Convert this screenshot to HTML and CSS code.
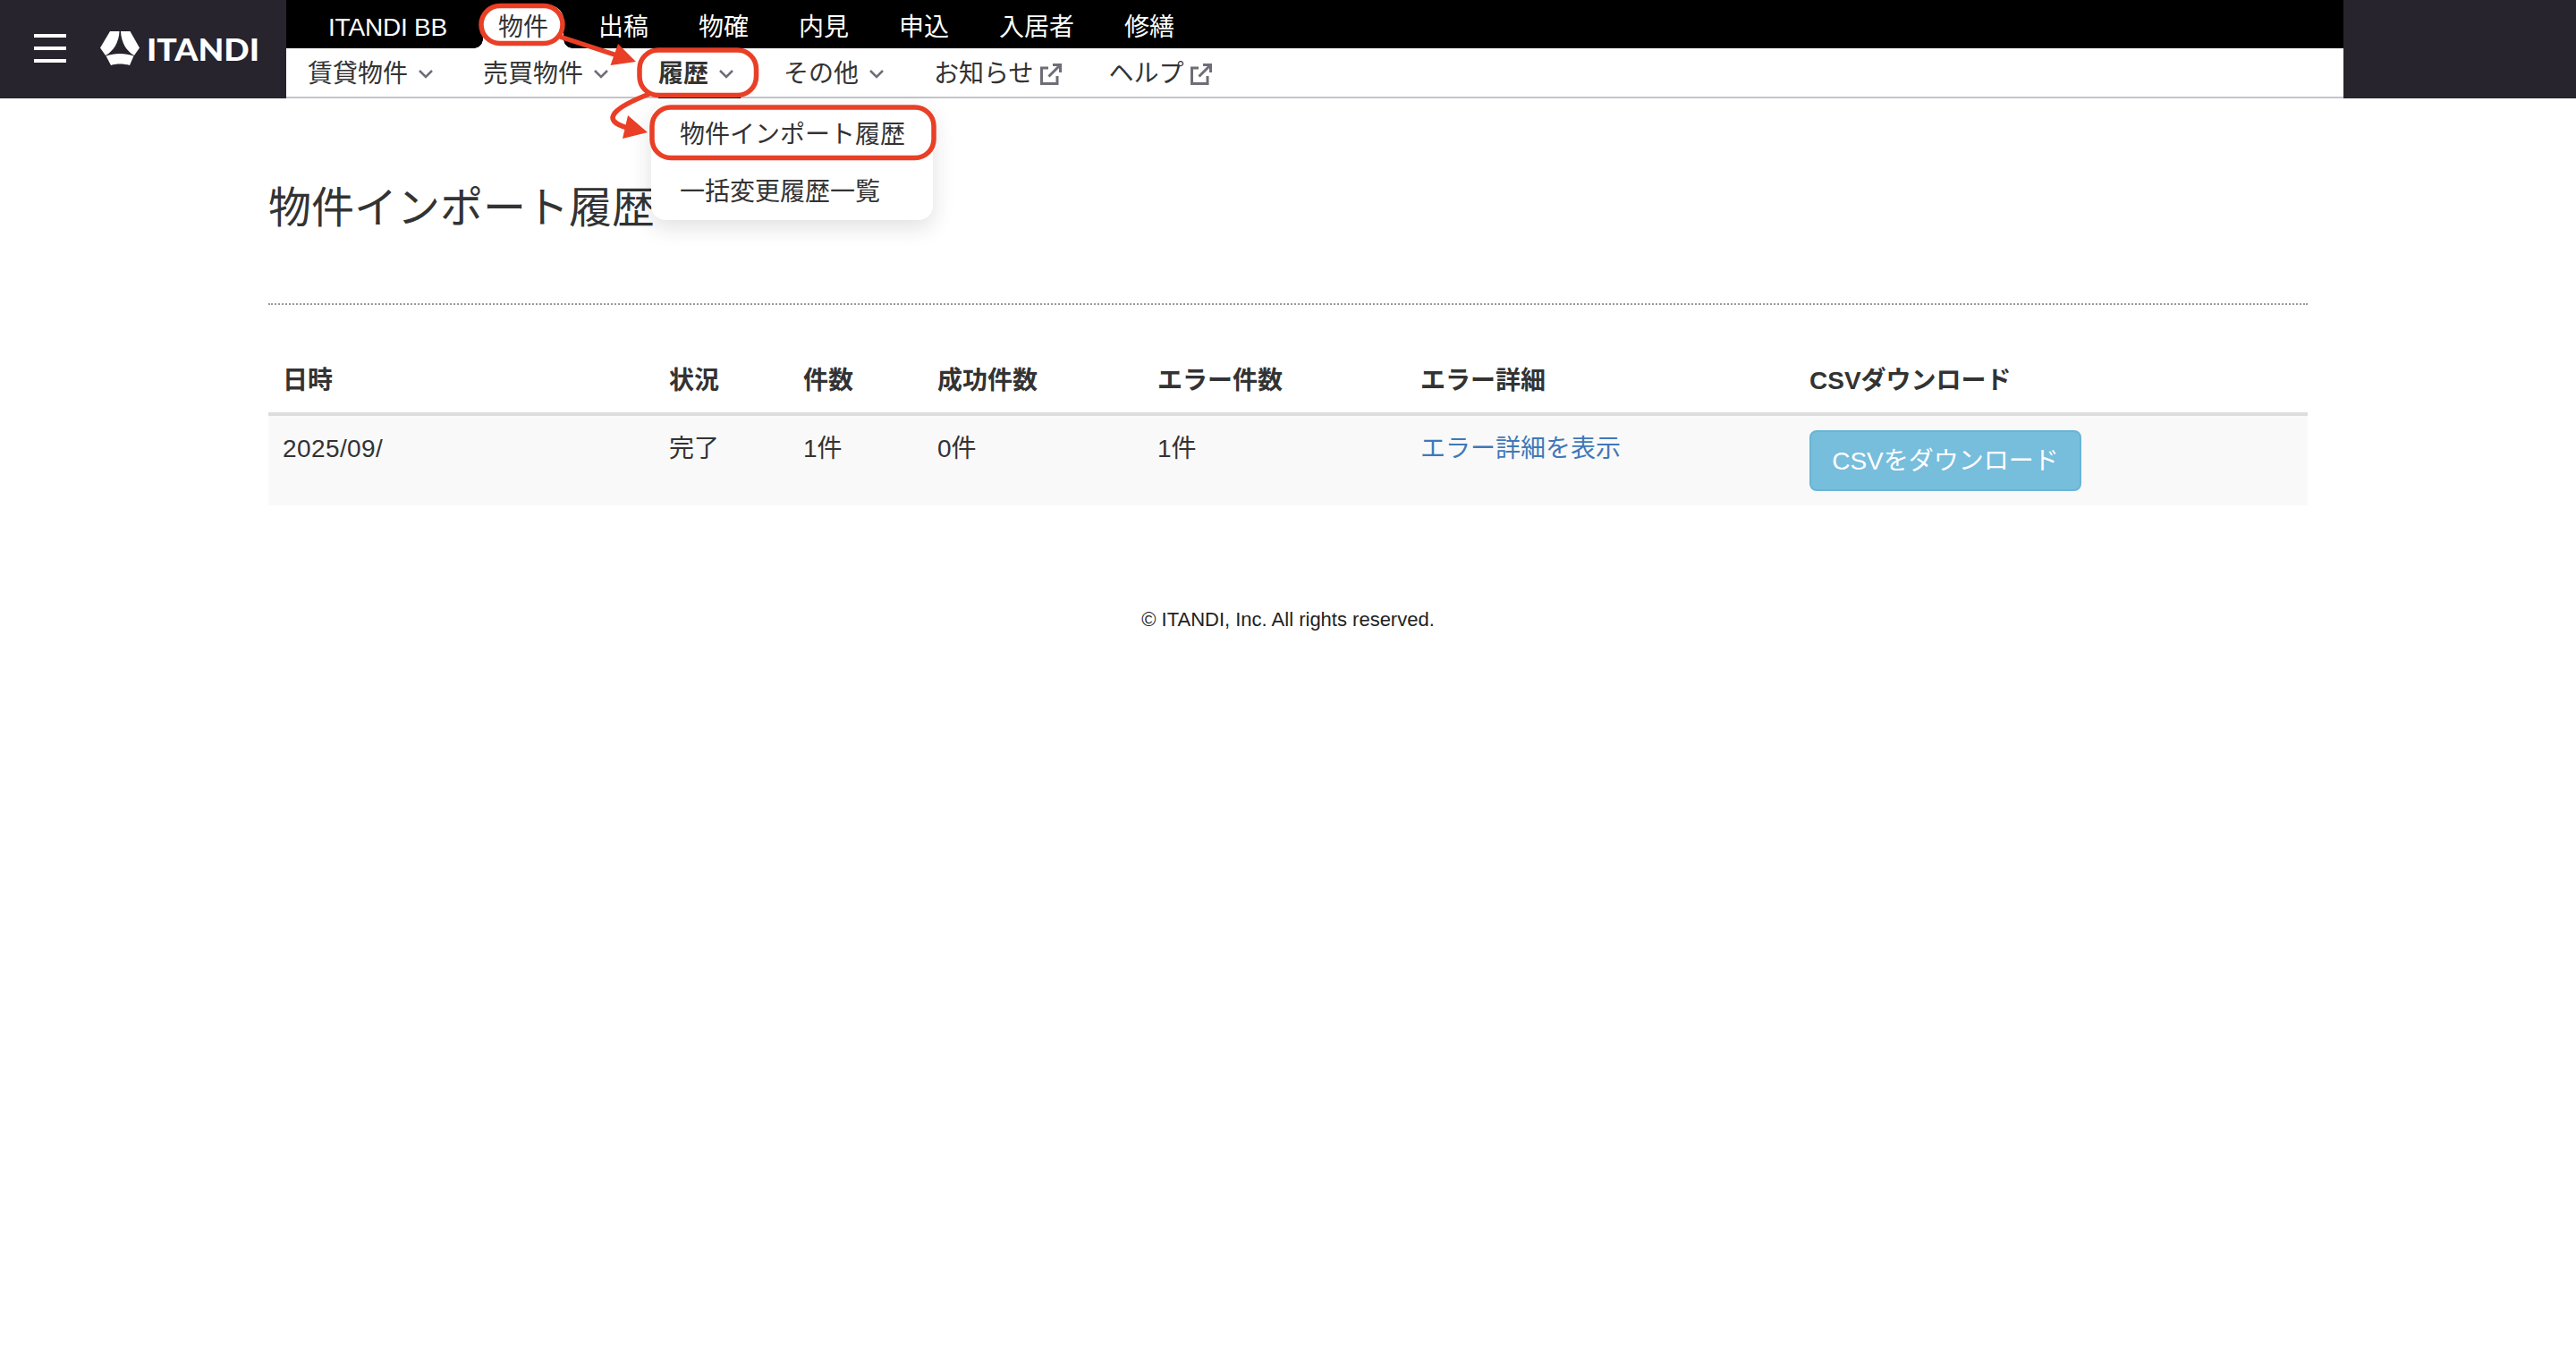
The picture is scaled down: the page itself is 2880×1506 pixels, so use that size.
FILE: index.html
```html
<!DOCTYPE html>
<html lang="ja">
<head>
    <meta charset="UTF-8">
    <meta name="viewport" content="width=device-width, initial-scale=1.0">
    <title>物件インポート履歴</title>
    <link rel="stylesheet" href="styles.css">
</head>
<body>
    <header class="header">
        <div class="brand">
            <div class="hamburger"><span></span><span></span><span></span></div>
            <svg class="logo-mark" width="44" height="38" viewBox="0 0 44 38" fill="#fff">
                <path d="M11 0H21.500C21 12 15 22 6 27L0 18.500Z"/>
                <path d="M23 0H33.500L44 18.500L38 27C29 22 23.500 12 23 0Z"/>
                <path d="M6.500 27.500C16 24 28 24 37.500 27.500L33 38C26 36 18 36 12 38Z"/>
            </svg>
            <svg class="logo-text" width="128" height="44" viewBox="0 0 128 44">
                <text x="-1" y="35" textLength="126" lengthAdjust="spacingAndGlyphs">ITANDI</text>
            </svg>
        </div>

        <div class="menus">
            <nav class="main-nav">
                <a class="home">ITANDI BB</a>
                <a class="current">物件</a>
                <a>出稿</a>
                <a>物確</a>
                <a>内見</a>
                <a>申込</a>
                <a>入居者</a>
                <a>修繕</a>
            </nav>
            <nav class="sub-nav">
                <a>賃貸物件<svg class="chevron" viewBox="0 0 16 10"><path d="M1 1L8 8L15 1"/></svg></a>
                <a>売買物件<svg class="chevron" viewBox="0 0 16 10"><path d="M1 1L8 8L15 1"/></svg></a>
                <div class="has-menu">
                    <a class="active">履歴<svg class="chevron" viewBox="0 0 16 10"><path d="M1 1L8 8L15 1"/></svg></a>
                    <div class="dropdown">
                        <a>物件インポート履歴</a>
                        <a>一括変更履歴一覧</a>
                    </div>
                </div>
                <a>その他<svg class="chevron" viewBox="0 0 16 10"><path d="M1 1L8 8L15 1"/></svg></a>
                <a>お知らせ<svg class="external" viewBox="0 0 24 24"><path d="M9 5H1.500V22.500H19V14M14 1.500H22.500V10M22 2L9.500 14.500"/></svg></a>
                <a>ヘルプ<svg class="external" viewBox="0 0 24 24"><path d="M9 5H1.500V22.500H19V14M14 1.500H22.500V10M22 2L9.500 14.500"/></svg></a>
            </nav>
        </div>
    </header>

    <main class="container">
        <h1>物件インポート履歴</h1>
        <table class="history">
            <colgroup>
                <col class="col-date"><col class="col-status"><col class="col-count"><col class="col-success">
                <col class="col-error"><col class="col-detail"><col class="col-csv">
            </colgroup>
            <thead>
                <tr>
                    <th>日時</th>
                    <th>状況</th>
                    <th>件数</th>
                    <th>成功件数</th>
                    <th>エラー件数</th>
                    <th>エラー詳細</th>
                    <th>CSVダウンロード</th>
                </tr>
            </thead>
            <tbody>
                <tr>
                    <td class="date">2025/09/</td>
                    <td>完了</td>
                    <td>1件</td>
                    <td>0件</td>
                    <td>1件</td>
                    <td><a class="link">エラー詳細を表示</a></td>
                    <td class="csv"><a class="btn">CSVをダウンロード</a></td>
                </tr>
            </tbody>
        </table>
    </main>

    <footer class="footer">© ITANDI, Inc. All rights reserved.</footer>

    <!-- 操作手順の赤枠と矢印 -->
    <svg class="guide" width="1100" height="260" viewBox="0 0 1100 260">
        <rect x="538" y="6.500" width="91" height="42" rx="21"/>
        <rect x="715" y="56" width="130.500" height="50.500" rx="21"/>
        <rect x="729" y="120" width="315" height="56.500" rx="21"/>
        <path d="M626 41L690 62"/>
        <path d="M726 105C690 119 668 134 702 143"/>
        <path class="head" d="M711 69L691 49L682.500 73Z"/>
        <path class="head" d="M724 148L702 129L696 155Z"/>
    </svg>
</body>
</html>
```
FILE: styles.css
```css
body {
    margin: 0;
    background-color: #fff;
    color: #333;
    font-family: "Liberation Sans", "Noto Sans CJK JP", sans-serif;
    font-size: 28px;
    line-height: 40px;
}

/* ヘッダー */
.header {
    display: flex;
    height: 110px;
    background-color: #27242e;
}

.brand {
    display: flex;
    align-items: center;
    box-sizing: border-box;
    width: 320px;
    padding-left: 38px;
}

.hamburger {
    display: flex;
    flex-direction: column;
    gap: 10px;
    width: 36px;
    margin: 0 38px 2px 0;
}

.hamburger span {
    height: 4px;
    background-color: #fff;
}

.logo-mark {
    margin: 0 9px 2px 0;
}

.logo-text text {
    font-family: Lato, sans-serif;
    font-size: 35px;
    font-weight: 900;
    fill: #fff;
}

.menus {
    width: 2300px;
    background-color: #fff;
}

.main-nav {
    display: flex;
    height: 54px;
    padding-left: 19px;
    background-color: #000;
}

.main-nav a {
    padding: 0 28px;
    color: #fff;
    line-height: 61px;
    white-space: nowrap;
}

.main-nav .home {
    width: 134px;
    letter-spacing: -0.2px;
}

.main-nav .current {
    position: relative;
    height: 48px;
    margin: 6px 11px 0;
    padding: 0 17px;
    border-radius: 16px 16px 0 0;
    background-color: #fff;
    color: #333;
    line-height: 49px;
}

/* タブの裾 */
.main-nav .current::before,
.main-nav .current::after {
    content: "";
    position: absolute;
    bottom: 0;
    width: 10px;
    height: 10px;
}

.main-nav .current::before {
    right: 100%;
    background: radial-gradient(circle at 0 0, #000 9.500px, #fff 10px);
}

.main-nav .current::after {
    left: 100%;
    background: radial-gradient(circle at 100% 0, #000 9.500px, #fff 10px);
}

.sub-nav {
    display: flex;
    gap: 48px;
    height: 54px;
    padding-left: 24px;
    border-bottom: 2px solid #c5c4cb;
}

.sub-nav a {
    display: flex;
    align-items: center;
    box-sizing: border-box;
    height: 56px;
    padding-top: 2px;
    white-space: nowrap;
}

.chevron {
    width: 16px;
    height: 10px;
    margin: 0 8px 0 12px;
}

.external {
    width: 24px;
    height: 24px;
    margin: 0 5px 1px 7px;
}

.chevron path,
.external path {
    fill: none;
    stroke: #6f6d76;
    stroke-width: 2.5;
}

.external path {
    stroke-width: 3;
}

.has-menu {
    position: relative;
}

.sub-nav .active {
    border-bottom: 2px solid #000;
    padding-top: 4px;
    font-weight: bold;
}

.dropdown {
    position: absolute;
    top: 64px;
    left: -8px;
    box-sizing: border-box;
    width: 315px;
    height: 128px;
    border-radius: 16px;
    background-color: #fff;
    box-shadow: 0 8px 24px rgba(39, 36, 46, 0.14);
}

.sub-nav .dropdown a {
    height: 64px;
    padding-left: 32px;
}

/* 本文 */
.container {
    width: 2280px;
    margin: 0 auto;
}

h1 {
    margin: 0 0 54px;
    padding: 88px 0 71px;
    border-bottom: 2px dotted #999;
    font-size: 48px;
    font-weight: normal;
    line-height: 70px;
}

.history {
    width: 100%;
    border-collapse: collapse;
    table-layout: fixed;
}

.col-date { width: 432px; }
.col-status, .col-count { width: 150px; }
.col-success { width: 246px; }
.col-error { width: 294px; }
.col-detail { width: 435px; }
.col-csv { width: 573px; }

.history th {
    height: 40px;
    padding: 11px 16px 15px;
    text-align: left;
}

.history td {
    height: 67px;
    padding: 17px 16px 16px;
    vertical-align: top;
}

.history .date {
    letter-spacing: 0.4px;
}

.history .csv {
    height: 68px;
    padding-top: 16px;
}

.history tbody tr {
    border-top: 4px solid #ddd;
    background-color: #f9f9f9;
}

.link {
    color: #3f78b8;
}

.btn {
    display: block;
    box-sizing: border-box;
    width: 304px;
    height: 68px;
    border: 2px solid #68b5d5;
    border-radius: 8px;
    background-color: #77bddc;
    color: #fff;
    line-height: 65px;
    text-align: center;
}

.footer {
    padding-top: 108px;
    color: #222;
    font-size: 22px;
    text-align: center;
}

/* 手順の注釈 */
.guide {
    position: absolute;
    top: 0;
    left: 0;
    fill: none;
    stroke: #e93f26;
    stroke-width: 5.5;
}

.guide .head {
    fill: #e93f26;
    stroke: none;
}
```
